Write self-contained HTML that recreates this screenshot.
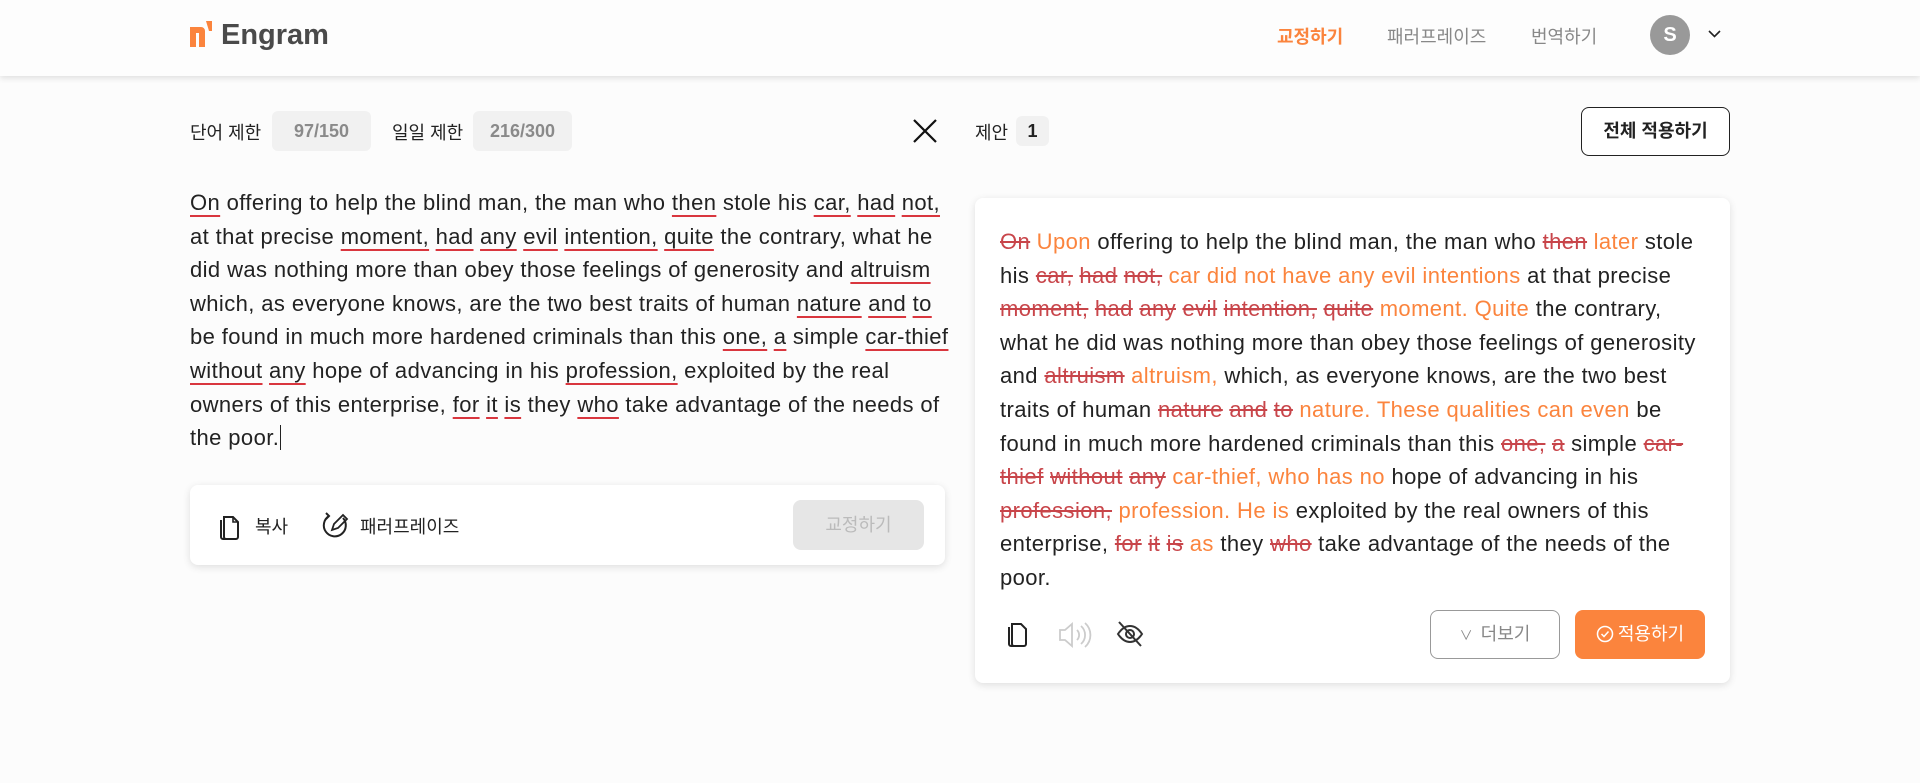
<!DOCTYPE html>
<html><head><meta charset="utf-8"><style>
*{box-sizing:border-box;margin:0;padding:0}
body{width:1920px;height:783px;background:#fcfcfc;font-family:"Liberation Sans","Noto Sans CJK KR",sans-serif;color:#222;position:relative;overflow:hidden}
.abs{position:absolute}
header{position:absolute;left:0;top:0;width:1920px;height:76px;background:#fdfdfd;box-shadow:0 2px 6px rgba(0,0,0,.12)}
.nav{font-size:18px;color:#888;top:23px}
.pill{background:#f1f1f1;border-radius:6px;color:#8a8a8a;font-weight:bold;font-size:18px;height:40px;line-height:40px;text-align:center;top:111px}
.lbl{font-size:18px;top:119px;color:#222}
.txt{font-size:22px;letter-spacing:0.4px;line-height:33.6px;white-space:nowrap}
.u{text-decoration:underline;text-decoration-color:#d9363e;text-decoration-thickness:2px;text-underline-offset:5px}
.s{color:#c8454a;text-decoration:line-through;text-decoration-color:#c8454a}
.o{color:#fb843d}
.card{background:#fff;border-radius:8px;box-shadow:0 2px 8px rgba(0,0,0,.12)}
</style></head><body>
<header>
  <svg class="abs" style="left:190px;top:21px" width="24" height="26" viewBox="0 0 24 26"><path d="M0 6h11a4 4 0 0 1 4 4v16h-6V12H6v14H0z" fill="#fb843d"/><path d="M16 0h6v10h-3z" fill="#fb843d"/></svg>
  <div class="abs" style="left:221px;top:19px;font-size:29px;font-weight:bold;color:#4a4a4a">Engram</div>
  <div class="abs nav" style="left:1277px;color:#fb843d;font-weight:bold">교정하기</div>
  <div class="abs nav" style="left:1387px">패러프레이즈</div>
  <div class="abs nav" style="left:1531px">번역하기</div>
  <div class="abs" style="left:1650px;top:15px;width:40px;height:40px;border-radius:50%;background:#999;color:#fff;font-weight:bold;font-size:20px;text-align:center;line-height:40px">S</div>
  <svg class="abs" style="left:1708px;top:30px" width="13" height="8" viewBox="0 0 13 8"><path d="M1 1l5.5 5.5L12 1" fill="none" stroke="#222" stroke-width="1.6"/></svg>
</header>

<div class="abs lbl" style="left:190px">단어 제한</div>
<div class="abs pill" style="left:272px;width:99px">97/150</div>
<div class="abs lbl" style="left:392px">일일 제한</div>
<div class="abs pill" style="left:473px;width:99px">216/300</div>
<svg class="abs" style="left:912px;top:118px" width="26" height="26" viewBox="0 0 26 26"><path d="M2 2l22 22M24 2L2 24" stroke="#111" stroke-width="2.2"/></svg>

<div class="abs lbl" style="left:975px">제안</div>
<div class="abs pill" style="left:1016px;width:33px;top:116px;height:30px;line-height:30px;color:#222;font-weight:bold">1</div>
<div class="abs" style="left:1581px;top:107px;width:149px;height:49px;border:1px solid #222;border-radius:8px;background:#fff;text-align:center;line-height:47px;font-size:18px;font-weight:bold">전체 적용하기</div>

<div class="abs txt" style="left:190px;top:186px">
<span class="u">On</span> offering to help the blind man, the man who <span class="u">then</span> stole his <span class="u">car,</span> <span class="u">had</span> <span class="u">not,</span><br>
at that precise <span class="u">moment,</span> <span class="u">had</span> <span class="u">any</span> <span class="u">evil</span> <span class="u">intention,</span> <span class="u">quite</span> the contrary, what he<br>
did was nothing more than obey those feelings of generosity and <span class="u">altruism</span><br>
which, as everyone knows, are the two best traits of human <span class="u">nature</span> <span class="u">and</span> <span class="u">to</span><br>
be found in much more hardened criminals than this <span class="u">one,</span> <span class="u">a</span> simple <span class="u">car-thief</span><br>
<span class="u">without</span> <span class="u">any</span> hope of advancing in his <span class="u">profession,</span> exploited by the real<br>
owners of this enterprise, <span class="u">for</span> <span class="u">it</span> <span class="u">is</span> they <span class="u">who</span> take advantage of the needs of<br>
the poor.<span style="border-left:1.5px solid #222;margin-left:1px"></span>
</div>

<div class="abs card" style="left:190px;top:485px;width:755px;height:80px">
  <svg class="abs" style="left:28px;top:27px" width="24" height="28" viewBox="0 0 24 28"><path d="M6 5h9l5 5v15a2 2 0 0 1-2 2H8a2 2 0 0 1-2-2z" fill="none" stroke="#222" stroke-width="2"/><path d="M3 8v17a2 2 0 0 0 2 2h12" fill="none" stroke="#222" stroke-width="2"/><path d="M15 5v5h5" fill="none" stroke="#222" stroke-width="1.6"/></svg>
  <div class="abs" style="left:65px;top:28px;font-size:18px">복사</div>
  <svg class="abs" style="left:130px;top:25px" width="30" height="30" viewBox="0 0 30 30"><path d="M9 6A11 11 0 1 0 23 8" fill="none" stroke="#222" stroke-width="2"/><path d="M6 3l3 3-3 3" fill="none" stroke="#222" stroke-width="2"/><path d="M12 20l2-6 9-9 4 4-9 9z" fill="none" stroke="#222" stroke-width="1.8"/></svg>
  <div class="abs" style="left:170px;top:28px;font-size:18px">패러프레이즈</div>
  <div class="abs" style="left:603px;top:15px;width:131px;height:50px;border-radius:8px;background:#e6e6e6;color:#bbb;font-size:18px;text-align:center;line-height:50px">교정하기</div>
</div>

<div class="abs card" style="left:975px;top:198px;width:755px;height:485px"></div>
<div class="abs txt" style="left:1000px;top:225px">
<span class="s">On</span> <span class="o">Upon</span> offering to help the blind man, the man who <span class="s">then</span> <span class="o">later</span> stole<br>
his <span class="s">car,</span> <span class="s">had</span> <span class="s">not,</span> <span class="o">car did not have any evil intentions</span> at that precise<br>
<span class="s">moment,</span> <span class="s">had</span> <span class="s">any</span> <span class="s">evil</span> <span class="s">intention,</span> <span class="s">quite</span> <span class="o">moment. Quite</span> the contrary,<br>
what he did was nothing more than obey those feelings of generosity<br>
and <span class="s">altruism</span> <span class="o">altruism,</span> which, as everyone knows, are the two best<br>
traits of human <span class="s">nature</span> <span class="s">and</span> <span class="s">to</span> <span class="o">nature. These qualities can even</span> be<br>
found in much more hardened criminals than this <span class="s">one,</span> <span class="s">a</span> simple <span class="s">car-</span><br>
<span class="s">thief</span> <span class="s">without</span> <span class="s">any</span> <span class="o">car-thief, who has no</span> hope of advancing in his<br>
<span class="s">profession,</span> <span class="o">profession. He is</span> exploited by the real owners of this<br>
enterprise, <span class="s">for</span> <span class="s">it</span> <span class="s">is</span> <span class="o">as</span> they <span class="s">who</span> take advantage of the needs of the<br>
poor.
</div>

<svg class="abs" style="left:1006px;top:621px" width="24" height="28" viewBox="0 0 24 28"><path d="M6 3h9l5 5v15a2 2 0 0 1-2 2H8a2 2 0 0 1-2-2z" fill="none" stroke="#222" stroke-width="2"/><path d="M3 6v17a2 2 0 0 0 2 2h12" fill="none" stroke="#222" stroke-width="2"/></svg>
<svg class="abs" style="left:1057px;top:620px" width="36" height="30" viewBox="0 0 36 30"><path d="M3 10h5l7-6v22l-7-6H3z" fill="none" stroke="#ccc" stroke-width="1.8"/><path d="M20 10a7 7 0 0 1 0 10M24 6a12 12 0 0 1 0 18M28 3a16 16 0 0 1 0 24" fill="none" stroke="#ccc" stroke-width="1.8"/></svg>
<svg class="abs" style="left:1115px;top:620px" width="30" height="28" viewBox="0 0 30 28"><path d="M3 14c4-6 8-8 12-8s8 2 12 8c-4 6-8 8-12 8s-8-2-12-8z" fill="none" stroke="#333" stroke-width="2"/><circle cx="15" cy="14" r="4" fill="none" stroke="#333" stroke-width="2"/><path d="M4 2l22 24" stroke="#333" stroke-width="2"/></svg>

<div class="abs" style="left:1430px;top:610px;width:130px;height:49px;border:1px solid #999;border-radius:8px;background:#fff;color:#888;font-size:18px;line-height:47px;text-align:center"><span style="font-size:13px;margin-right:8px">∨</span>더보기</div>
<div class="abs" style="left:1575px;top:610px;width:130px;height:49px;border-radius:8px;background:#fb843d;color:#fff;font-size:18px;line-height:49px;text-align:center"><svg width="18" height="18" viewBox="0 0 18 18" style="vertical-align:-3px;margin-right:4px"><circle cx="9" cy="9" r="7.5" fill="none" stroke="#fff" stroke-width="1.5"/><path d="M5.5 9l2.5 2.5 4.5-5" fill="none" stroke="#fff" stroke-width="1.5"/></svg>적용하기</div>
</body></html>
